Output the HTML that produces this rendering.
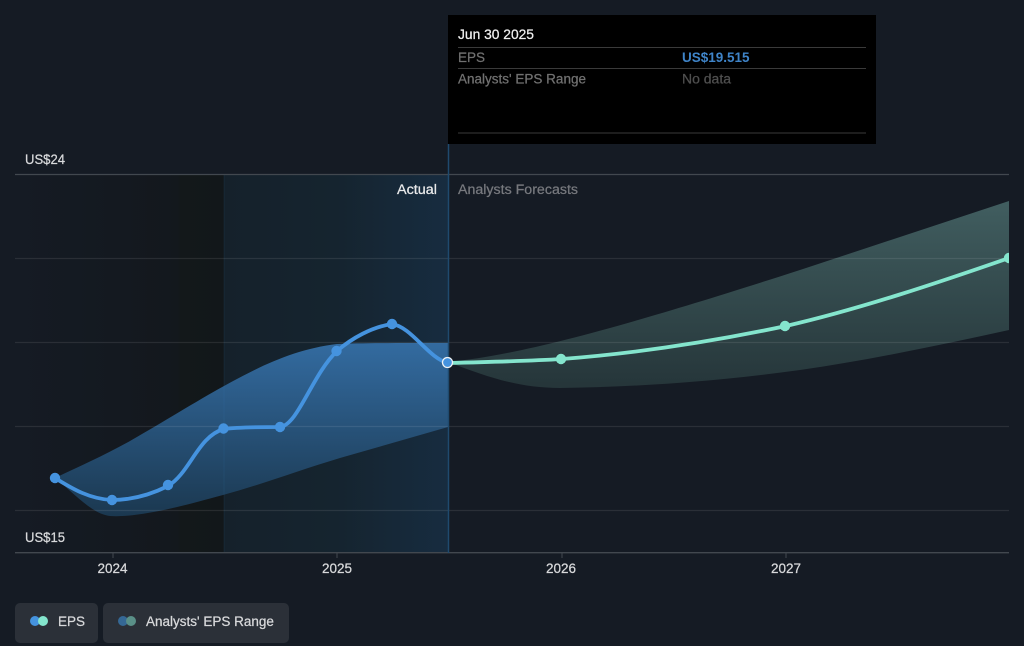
<!DOCTYPE html>
<html>
<head>
<meta charset="utf-8">
<style>
html,body{margin:0;padding:0;background:#151b24;}
body{width:1024px;height:646px;overflow:hidden;position:relative;font-family:"Liberation Sans",sans-serif;}
svg{position:absolute;left:0;top:0;}
svg text{font-family:"Liberation Sans",sans-serif;font-size:13.5px;stroke-width:0.25px;}
.btn{position:absolute;top:603px;height:40px;background:#2b3038;border-radius:5px;}
.dot{position:absolute;width:10px;height:10px;border-radius:50%;top:13px;}
.lb{position:absolute;top:8.500px;font-size:13.5px;line-height:20px;color:#d8d9db;white-space:nowrap;-webkit-text-stroke:0.25px #d8d9db;}
</style>
</head>
<body>
<svg width="1024" height="646" viewBox="0 0 1024 646">
<defs>
<linearGradient id="dark" x1="0" x2="1" y1="0" y2="0">
<stop offset="0" stop-color="#151b24"/>
<stop offset="0.5" stop-color="#141920"/>
<stop offset="0.78" stop-color="#13181d"/>
<stop offset="0.79" stop-color="#13181a"/>
<stop offset="1" stop-color="#12171a"/>
</linearGradient>
<linearGradient id="hl" x1="0" x2="1" y1="0" y2="0">
<stop offset="0" stop-color="#15212b"/>
<stop offset="0.5" stop-color="#15242f"/>
<stop offset="1" stop-color="#172c40"/>
</linearGradient>
<linearGradient id="blue" gradientUnits="userSpaceOnUse" x1="0" x2="0" y1="343" y2="516">
<stop offset="0" stop-color="#336ba0"/>
<stop offset="1" stop-color="#1b3850"/>
</linearGradient>
<linearGradient id="teal" gradientUnits="userSpaceOnUse" x1="0" x2="0" y1="200" y2="390">
<stop offset="0" stop-color="#415e60"/>
<stop offset="1" stop-color="#253539"/>
</linearGradient>
<clipPath id="plot"><rect x="0" y="0" width="1009" height="646"/></clipPath>
</defs>

<rect x="15" y="175" width="209" height="378" fill="url(#dark)"/>
<rect x="224" y="175" width="225" height="378" fill="url(#hl)"/>

<path d="M55 478 C80 466 105 455 130 441 C165 421 195 402 224 386 C260 366 295 349 337 344 C360 343 400 343 448 343 L448 427 L340 458 C300 470 260 485 223 495 C190 504 140 518 110 516 C92 514 75 494 55 478 Z" fill="url(#blue)"/>

<path d="M448 362 C520 355 620 328 800 270 L1009 201 L1009 330 C940 345 870 360 800 370 C720 381 640 387 560 388 C520 388 490 378 448 362 Z" fill="url(#teal)"/>

<rect x="223.200" y="175" width="1.600" height="378" fill="#4593df" opacity="0.06"/>

<g stroke="#ffffff" stroke-opacity="0.09" stroke-width="1.300">
<line x1="15" x2="1009" y1="258.500" y2="258.500"/>
<line x1="15" x2="1009" y1="342.500" y2="342.500"/>
<line x1="15" x2="1009" y1="426.500" y2="426.500"/>
<line x1="15" x2="1009" y1="510.500" y2="510.500"/>
</g>
<line x1="15" x2="1009" y1="174.500" y2="174.500" stroke="#42484f" stroke-width="1.300"/>
<line x1="15" x2="1009" y1="552.700" y2="552.700" stroke="#42484f" stroke-width="1.300"/>
<g stroke="#42484f" stroke-width="1">
<line x1="113" x2="113" y1="553" y2="558"/>
<line x1="337" x2="337" y1="553" y2="558"/>
<line x1="562" x2="562" y1="553" y2="558"/>
<line x1="786" x2="786" y1="553" y2="558"/>
</g>

<line x1="448.500" x2="448.500" y1="144" y2="553" stroke="#1f4a6e" stroke-width="1.500"/>

<path d="M55 478 C70 487 88 499 112 500 C132 500 152 494 168 486 C190 473 198 436 224 429 C240 427 265 427 280 427 C298 425 312 375 337 351 C352 338 372 327 392 324 C412 327 428 358 448 363" fill="none" stroke="#4593df" stroke-width="3.800" stroke-linecap="round"/>
<g clip-path="url(#plot)">
<path d="M448 363 C490 362 530 361 562 359 C640 353 720 340 786 326 C860 309 940 282 1009 258" fill="none" stroke="#84e5cd" stroke-width="3.800" stroke-linecap="round"/>
<circle cx="1009" cy="258" r="5.200" fill="#84e5cd"/>
</g>

<g fill="#4593df">
<circle cx="55" cy="478" r="5.200"/>
<circle cx="112" cy="500" r="5.200"/>
<circle cx="168" cy="485" r="5.200"/>
<circle cx="223.500" cy="428.500" r="5.200"/>
<circle cx="280" cy="427" r="5.200"/>
<circle cx="336.500" cy="351" r="5.200"/>
<circle cx="392" cy="324" r="5.200"/>
</g>
<g fill="#84e5cd">
<circle cx="561" cy="359" r="5.200"/>
<circle cx="785" cy="326" r="5.200"/>
</g>
<circle cx="447.500" cy="362.500" r="5" fill="#4593df" stroke="#eef2f5" stroke-width="1.300"/>

<rect x="448" y="15" width="428" height="129" fill="#000"/>
<g stroke="#3a3a3a" stroke-width="1">
<line x1="458" x2="866" y1="47.500" y2="47.500"/>
<line x1="458" x2="866" y1="68.500" y2="68.500"/>
<line x1="458" x2="866" y1="133" y2="133"/>
</g>
<text x="458" y="39" fill="#f0f0f0" stroke="#f0f0f0" textLength="76" lengthAdjust="spacingAndGlyphs">Jun 30 2025</text>
<text x="458" y="62" fill="#717171" stroke="#717171">EPS</text>
<text x="682" y="62" fill="#3f84c8" style="font-weight:700;stroke-width:0">US$19.515</text>
<text x="458" y="83.500" fill="#717171" stroke="#717171" textLength="128" lengthAdjust="spacingAndGlyphs">Analysts' EPS Range</text>
<text x="682" y="83.500" fill="#4f4f4f" stroke="#4f4f4f" textLength="49" lengthAdjust="spacingAndGlyphs">No data</text>

<text x="25" y="164" fill="#d8d9db" stroke="#d8d9db" textLength="40" lengthAdjust="spacingAndGlyphs">US$24</text>
<text x="25" y="542" fill="#d8d9db" stroke="#d8d9db" textLength="40" lengthAdjust="spacingAndGlyphs">US$15</text>
<text x="397" y="194" fill="#e8e9ea" stroke="#e8e9ea" textLength="40" lengthAdjust="spacingAndGlyphs">Actual</text>
<text x="458" y="194" fill="#77797e" stroke="#77797e" textLength="120" lengthAdjust="spacingAndGlyphs">Analysts Forecasts</text>

<g fill="#d8d9db" stroke="#d8d9db" text-anchor="middle">
<text x="112.500" y="573">2024</text>
<text x="337" y="573">2025</text>
<text x="561" y="573">2026</text>
<text x="786" y="573">2027</text>
</g>
</svg>

<div class="btn" style="left:15px;width:83px;">
<div class="dot" style="left:15px;background:#4593df;"></div>
<div class="dot" style="left:23px;background:#84e5cd;"></div>
<div class="lb" style="left:43px;">EPS</div>
</div>
<div class="btn" style="left:103px;width:186px;">
<div class="dot" style="left:15px;background:#356895;"></div>
<div class="dot" style="left:23px;background:#5a9088;"></div>
<div class="lb" style="left:43px;">Analysts' EPS Range</div>
</div>
</body>
</html>
